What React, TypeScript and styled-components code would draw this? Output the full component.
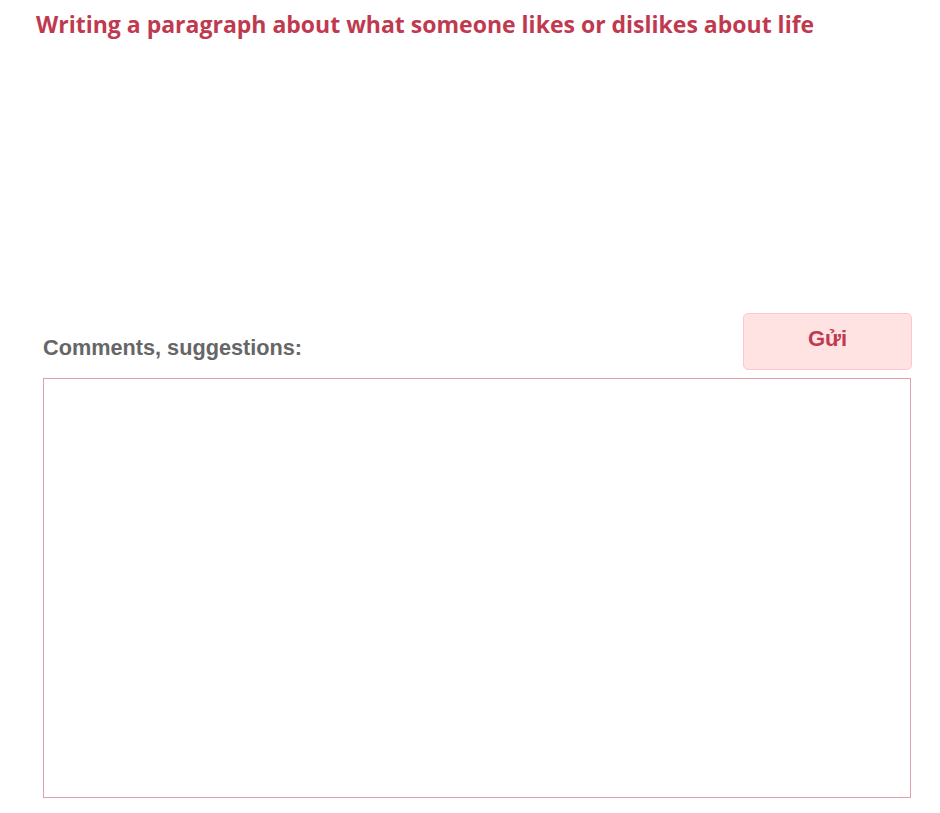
import * as React from "react";
import styled, { createGlobalStyle } from "styled-components";

const GlobalStyle = createGlobalStyle`
  html, body {
    margin: 0;
    padding: 0;
    background: #ffffff;
  }
`;

const Page = styled.div`
  width: 940px;
  height: 813px;
  box-sizing: border-box;
  padding: 8px 0 0 0;
  display: flex;
  flex-direction: column;
`;

const Title = styled.h1`
  margin: 0 0 0 36px;
  font-family: "Open Sans", "Noto Sans", sans-serif;
  font-weight: 700;
  font-size: 23px;
  line-height: 32px;
  color: #bf3a4f;
`;

const Spacer = styled.div`
  height: 273px;
`;

const Form = styled.div`
  margin-left: 43px;
  width: 869px;
  display: flex;
  flex-direction: column;
`;

const FormHeader = styled.div`
  display: flex;
  align-items: flex-end;
  justify-content: space-between;
  margin-bottom: 8px;
`;

const Label = styled.label`
  font-family: "Liberation Sans", Arial, sans-serif;
  font-weight: 700;
  font-size: 21.7px;
  line-height: 26px;
  color: #666666;
  padding-bottom: 9px;
`;

const SendButton = styled.button`
  width: 169px;
  height: 57px;
  box-sizing: border-box;
  background: #ffe3e3;
  border: 1px solid #fec6cd;
  border-radius: 5px;
  font-family: "Liberation Sans", Arial, sans-serif;
  font-weight: 700;
  font-size: 22px;
  color: #c0394f;
  padding: 0 0 6px 0;
  cursor: pointer;
`;

const TextArea = styled.textarea`
  width: 868px;
  height: 420px;
  box-sizing: border-box;
  border: 1px solid #e09faa;
  border-radius: 0;
  resize: none;
  outline: none;
  padding: 8px;
  font-family: "Liberation Sans", Arial, sans-serif;
  font-size: 16px;
`;

export default function App() {
  return (
    <>
      <GlobalStyle />
      <Page>
        <Title>Writing a paragraph about what someone likes or dislikes about life</Title>
        <Spacer />
        <Form>
          <FormHeader>
            <Label>Comments, suggestions:</Label>
            <SendButton>Gửi</SendButton>
          </FormHeader>
          <TextArea />
        </Form>
      </Page>
    </>
  );
}
